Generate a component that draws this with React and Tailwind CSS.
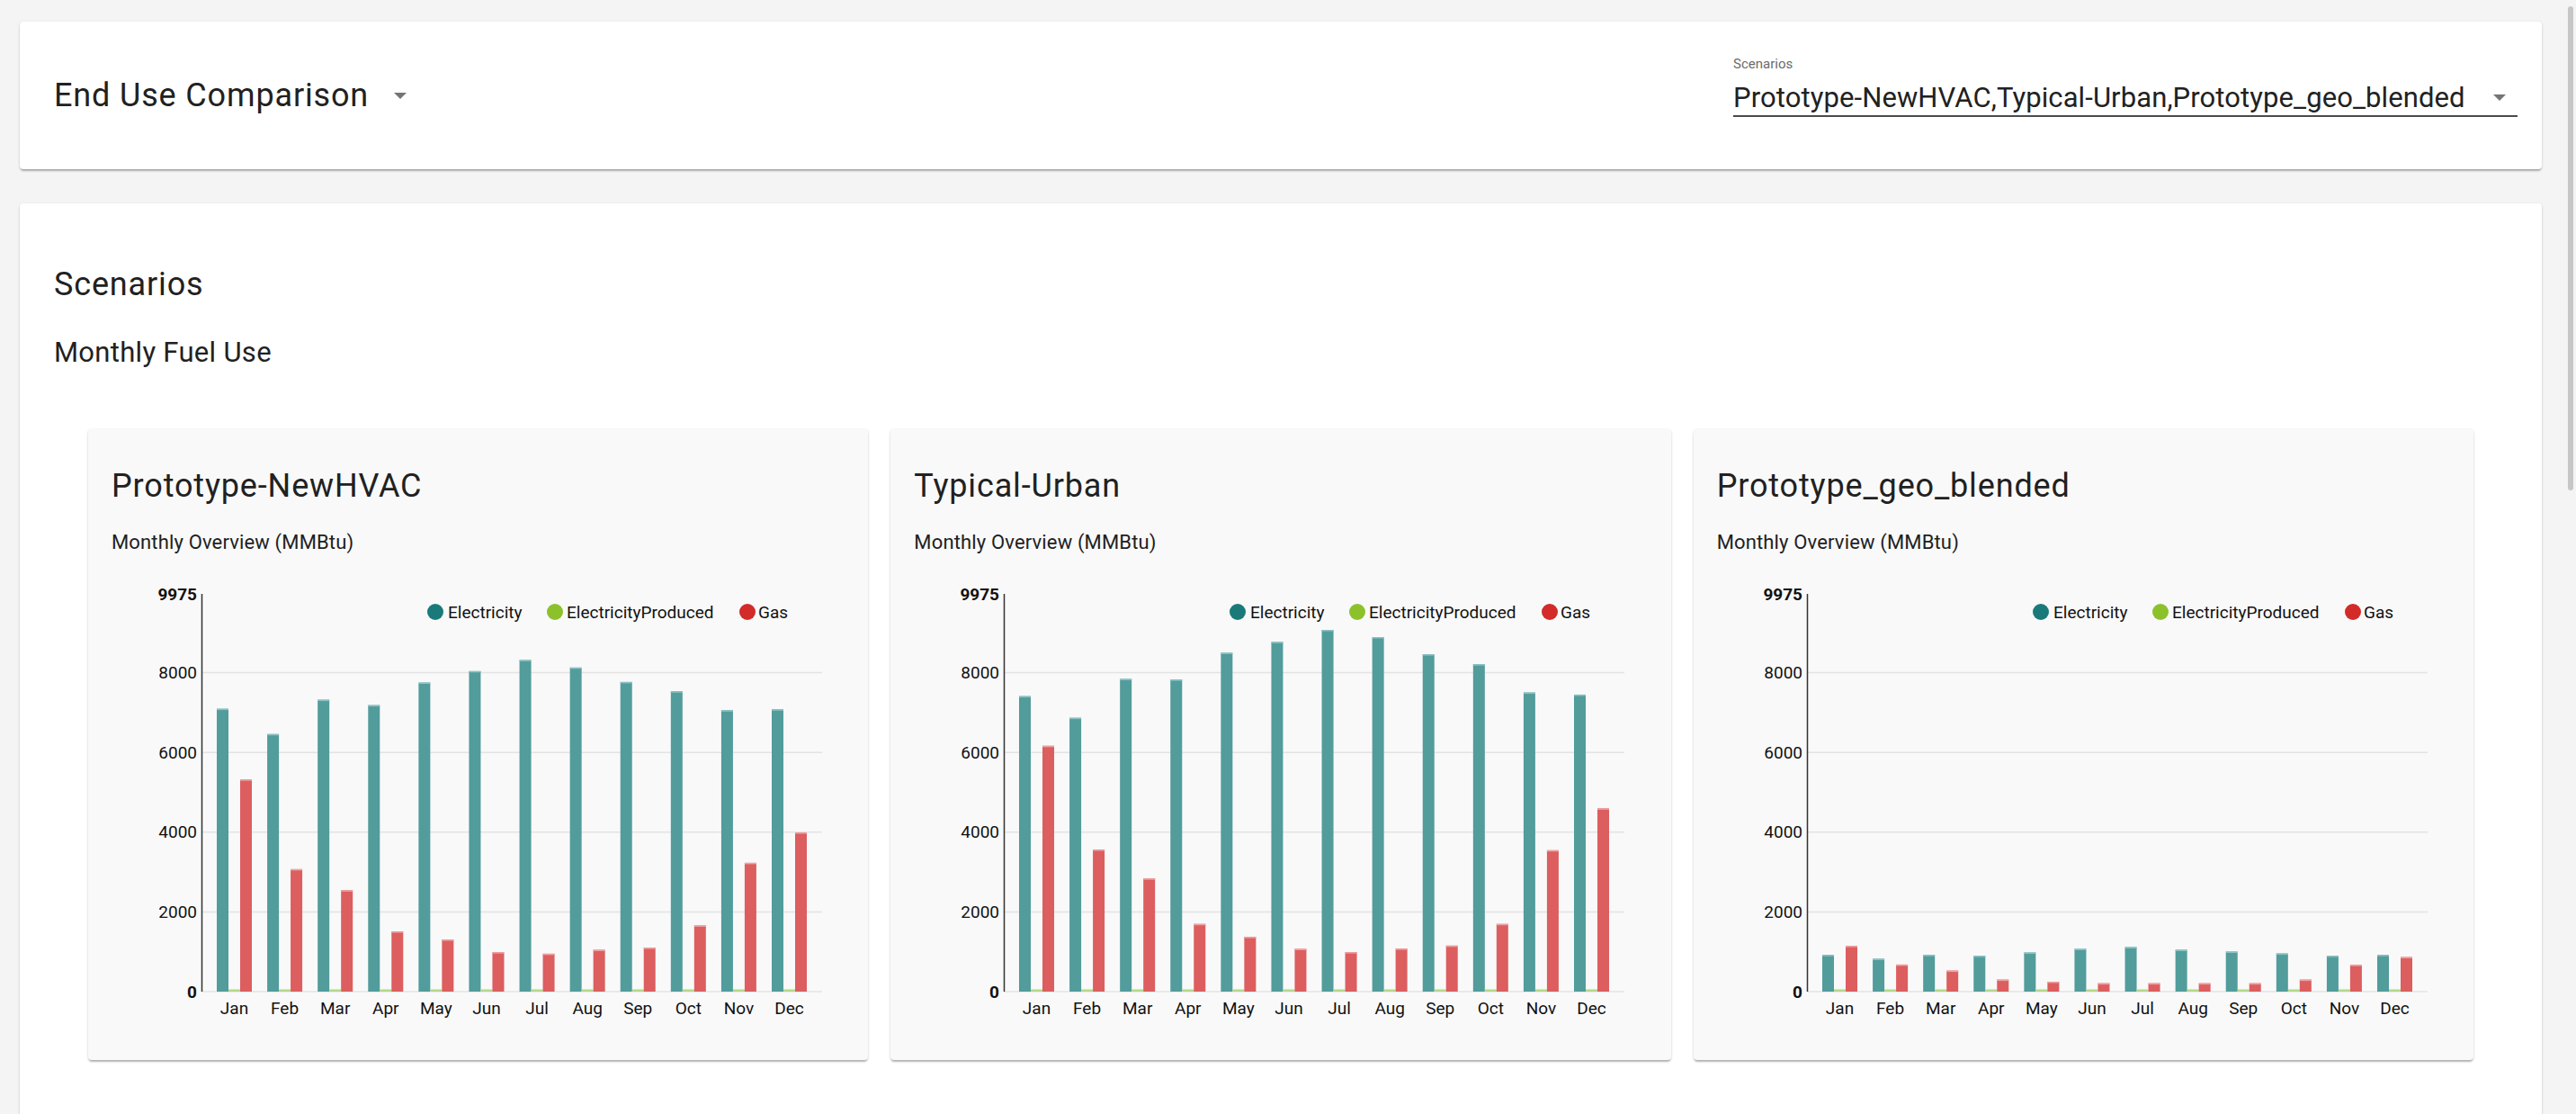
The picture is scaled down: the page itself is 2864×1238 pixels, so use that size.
import React from "react"

const months = ["Jan", "Feb", "Mar", "Apr", "May", "Jun", "Jul", "Aug", "Sep", "Oct", "Nov", "Dec"]

const scenarios = [
  {
    name: "Prototype-NewHVAC",
    electricity: [7094, 6460, 7321, 7185, 7751, 8038, 8317, 8128, 7766, 7532, 7057, 7079],
    gas: [5321, 3072, 2543, 1509, 1306, 989, 951, 1049, 1102, 1660, 3230, 3992],
  },
  {
    name: "Typical-Urban",
    electricity: [7411, 6868, 7842, 7826, 8498, 8770, 9072, 8891, 8460, 8211, 7502, 7449],
    gas: [6166, 3562, 2838, 1698, 1374, 1072, 989, 1079, 1155, 1698, 3547, 4596],
  },
  {
    name: "Prototype_geo_blended",
    electricity: [921, 823, 921, 898, 981, 1072, 1117, 1049, 1004, 958, 898, 921],
    gas: [1147, 679, 528, 302, 249, 211, 211, 211, 211, 302, 672, 868],
  },
]

const MAX = 9975
const PLOT_TOP = 20
const PLOT_BOTTOM = 462
const AXIS_X = 100
const PLOT_RIGHT = 790
const scale = (PLOT_BOTTOM - PLOT_TOP) / MAX

function Caret({ className }) {
  return (
    <svg className={className} width="14" height="7" viewBox="0 0 14 7">
      <path d="M0 0 L14 0 L7 7 Z" fill="#757575" />
    </svg>
  )
}

function Bar({ x, value, fill, top }) {
  const h = value * scale
  const y = PLOT_BOTTOM - h
  return (
    <g>
      <rect x={x} y={y} width="13" height={h} fill={fill} />
      <rect x={x} y={y} width="13" height="1.5" fill={top} />
    </g>
  )
}

function MonthlyChart({ data }) {
  const ticks = [0, 2000, 4000, 6000, 8000]
  const step = (656 - 39) / 11

  return (
    <svg width="815" height="498" className="block" style={{ fontFamily: "Roboto, sans-serif" }}>
      {ticks.map((t) => {
        const y = PLOT_BOTTOM - t * scale
        return (
          <g key={t}>
            <line x1={AXIS_X} x2={PLOT_RIGHT} y1={y} y2={y} stroke="#e3e3e3" strokeWidth="1.5" />
            <text
              x="95"
              y={y + 6.7}
              textAnchor="end"
              fontSize="19"
              fontWeight={t === 0 ? 700 : 400}
              fill="#111"
            >
              {t}
            </text>
          </g>
        )
      })}
      <text x="95" y={PLOT_TOP + 6.7} textAnchor="end" fontSize="19" fontWeight="700" fill="#111">
        {MAX}
      </text>
      <line x1={AXIS_X + 0.5} x2={AXIS_X + 0.5} y1={PLOT_TOP} y2={PLOT_BOTTOM} stroke="#333" strokeWidth="1.5" />

      {months.map((m, i) => {
        const gx = 117 + i * step
        return (
          <g key={m}>
            <Bar x={gx} value={data.electricity[i]} fill="#529c9c" top="#8cc2c2" />
            <rect x={gx + 13} y={PLOT_BOTTOM - 2.5} width="13" height="2.5" fill="#b3d98a" />
            <Bar x={gx + 26} value={data.gas[i]} fill="#dc5e5f" top="#eea3a3" />
            <text x={gx + 19.5} y="487" textAnchor="middle" fontSize="19" fill="#111">
              {m}
            </text>
          </g>
        )
      })}

      <g fontSize="19" fill="#111">
        <circle cx="360" cy="40" r="9" fill="#1a7a7a" />
        <text x="374" y="47">Electricity</text>
        <circle cx="493" cy="40" r="9" fill="#8cc12c" />
        <text x="506" y="47">ElectricityProduced</text>
        <circle cx="707" cy="40" r="9" fill="#d32a2a" />
        <text x="719" y="47">Gas</text>
      </g>
    </svg>
  )
}

function ScenarioCard({ scenario }) {
  return (
    <div className="bg-[#f9f9f9] rounded-[4px] shadow-[0_1px_3px_rgba(0,0,0,0.18),0_3px_2px_-1px_rgba(0,0,0,0.22)] pt-[45px] px-[26px] pb-[40px]">
      <h3 className="text-[36px] leading-none tracking-[0.85px] text-[#212121] whitespace-nowrap">{scenario.name}</h3>
      <p className="mt-[34px] text-[22px] leading-none tracking-[0.15px] text-[#212121]">Monthly Overview (MMBtu)</p>
      <div className="mt-[26px]">
        <MonthlyChart data={scenario} />
      </div>
    </div>
  )
}

export default function App() {
  return (
    <div className="h-[1238px] w-full flex overflow-hidden bg-[#f4f4f4] font-['Roboto',sans-serif] text-[#212121]">
      <div className="flex-1 px-[22px] pt-[24px]">
        <div className="h-[164px] flex items-start bg-white rounded-[4px] shadow-[0_1px_3px_rgba(0,0,0,0.18),0_3px_2px_-1px_rgba(0,0,0,0.22)]">
          <div className="mt-[64px] ml-[38px] flex items-center gap-[28px]">
            <h1 className="text-[36px] leading-none tracking-[0.85px] whitespace-nowrap">End Use Comparison</h1>
            <Caret className="mt-[1px]" />
          </div>
          <div className="ml-auto mr-[27px] mt-[40px] w-[872px]">
            <div className="text-[15px] leading-none text-[#6b6b6b]">Scenarios</div>
            <div className="mt-[14px] pb-[4px] flex items-center justify-between border-b-2 border-[#4a4a4a]">
              <span className="text-[31px] leading-none tracking-[0.1px] whitespace-nowrap">
                Prototype-NewHVAC,Typical-Urban,Prototype_geo_blended
              </span>
              <Caret className="mr-[13px]" />
            </div>
          </div>
        </div>

        <div className="mt-[38px] bg-white rounded-[4px] shadow-[0_1px_3px_rgba(0,0,0,0.18),0_3px_2px_-1px_rgba(0,0,0,0.22)] pt-[72px] px-[38px] pb-[80px]">
          <h2 className="text-[36px] leading-none tracking-[0.85px]">Scenarios</h2>
          <h4 className="mt-[42px] text-[31px] leading-none tracking-[0.3px]">Monthly Fuel Use</h4>
          <div className="mt-[70px] px-[38px] grid grid-cols-3 gap-[25px]">
            {scenarios.map((s) => (
              <ScenarioCard key={s.name} scenario={s} />
            ))}
          </div>
        </div>
      </div>

      <div className="w-[16px] shrink-0">
        <div className="ml-[7px] mt-[7px] w-[6px] h-[538px] rounded-full bg-[#c7c7c7]" />
      </div>
    </div>
  )
}
